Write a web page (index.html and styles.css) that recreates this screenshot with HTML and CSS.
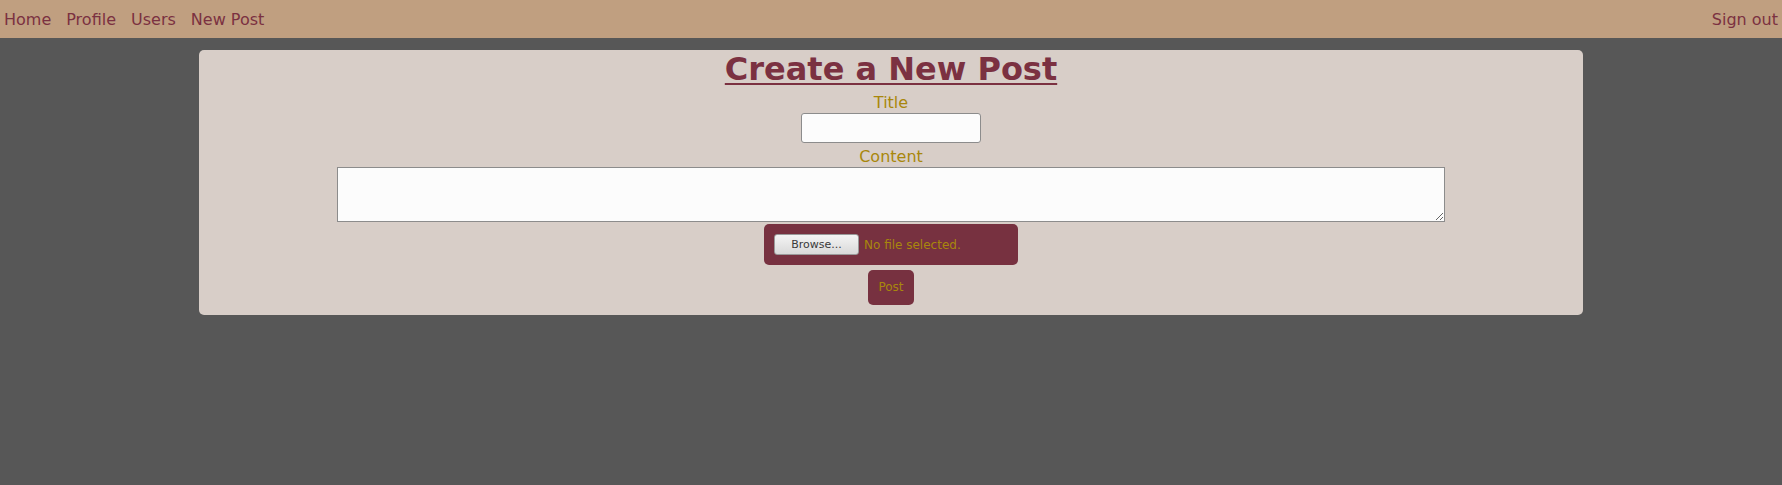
FILE: index.html
```html
<!DOCTYPE html>
<html lang="en">
<head>
<meta charset="utf-8">
<title>Create a New Post</title>
<link rel="stylesheet" href="styles.css">
</head>
<body>
<nav class="topnav">
  <div class="nav-left">
    <a href="#" class="nav-link">Home</a>
    <a href="#" class="nav-link">Profile</a>
    <a href="#" class="nav-link">Users</a>
    <a href="#" class="nav-link">New Post</a>
  </div>
  <a href="#" class="nav-link">Sign out</a>
</nav>
<main class="card">
  <h1 class="card-title"><a href="#">Create a New Post</a></h1>
  <form class="post-form">
    <label class="field-label label-title" for="title">Title</label>
    <input class="title-input" id="title" type="text">
    <label class="field-label label-content" for="content">Content</label>
    <textarea class="content-input" id="content"></textarea>
    <div class="file-box">
      <div class="file-inner">
        <span class="browse-btn">Browse...</span>
        <span class="file-status">No file selected.</span>
      </div>
    </div>
    <button type="button" class="post-btn">Post</button>
  </form>
</main>
</body>
</html>
```
FILE: styles.css
```css
html, body {
  margin: 0;
  padding: 0;
}
body {
  background: #575757;
  font-family: "DejaVu Sans", sans-serif;
  min-height: 485px;
}
.topnav {
  height: 38px;
  background: #c09f80;
  display: flex;
  align-items: center;
  justify-content: space-between;
  padding: 0 4px;
  box-sizing: border-box;
}
.nav-left {
  display: flex;
  gap: 15px;
}
.nav-link {
  color: #7b3141;
  text-decoration: none;
  font-size: 16px;
}
.card {
  width: 1384px;
  margin: 12px auto 0;
  background: #d8cec8;
  border-radius: 5px;
  padding: 1px 0 10px;
  box-sizing: border-box;
  display: flex;
  flex-direction: column;
  align-items: center;
}
.card-title {
  margin: 0;
  font-size: 32px;
  font-weight: bold;
  line-height: 37px;
}
.card-title a {
  color: #7b3141;
  text-decoration: underline;
  text-underline-offset: 3px;
  text-decoration-thickness: 2px;
}
.post-form {
  width: 100%;
  display: flex;
  flex-direction: column;
  align-items: center;
}
.field-label {
  color: #a8870c;
  font-size: 16px;
  line-height: 19px;
}
.label-title {
  margin-top: 5px;
}
.label-content {
  margin-top: 4px;
}
.title-input {
  margin: 1px 0 0;
  width: 180px;
  height: 30px;
  box-sizing: border-box;
  border: 1px solid #8c8c8c;
  border-radius: 3px;
  background: #fcfcfc;
  padding: 2px 4px;
}
.content-input {
  margin: 1px 0 0;
  width: 80%;
  height: 55px;
  box-sizing: border-box;
  border: 1px solid #8c8c8c;
  border-radius: 0;
  background: #fcfcfc;
  padding: 2px;
  font-family: "DejaVu Sans Mono", monospace;
}
.file-box {
  margin-top: 2px;
  background: #773140;
  border-radius: 5px;
  padding: 10px;
}
.file-inner {
  width: 234px;
  height: 21px;
  display: flex;
  align-items: center;
  gap: 5px;
}
.browse-btn {
  width: 85px;
  height: 21px;
  box-sizing: border-box;
  border: 1px solid #9a9a9a;
  border-radius: 3px;
  background: linear-gradient(#f4f4f4, #d9d9d9);
  color: #3a3a3a;
  font-size: 11px;
  display: flex;
  align-items: center;
  justify-content: center;
}
.file-status {
  color: #a8870c;
  font-size: 12px;
}
.post-btn {
  margin-top: 5px;
  background: #773140;
  color: #a8870c;
  border: none;
  border-radius: 5px;
  font-family: "DejaVu Sans", sans-serif;
  font-size: 12px;
  line-height: 15px;
  padding: 10px;
  width: 46px;
  height: 35px;
}
```
